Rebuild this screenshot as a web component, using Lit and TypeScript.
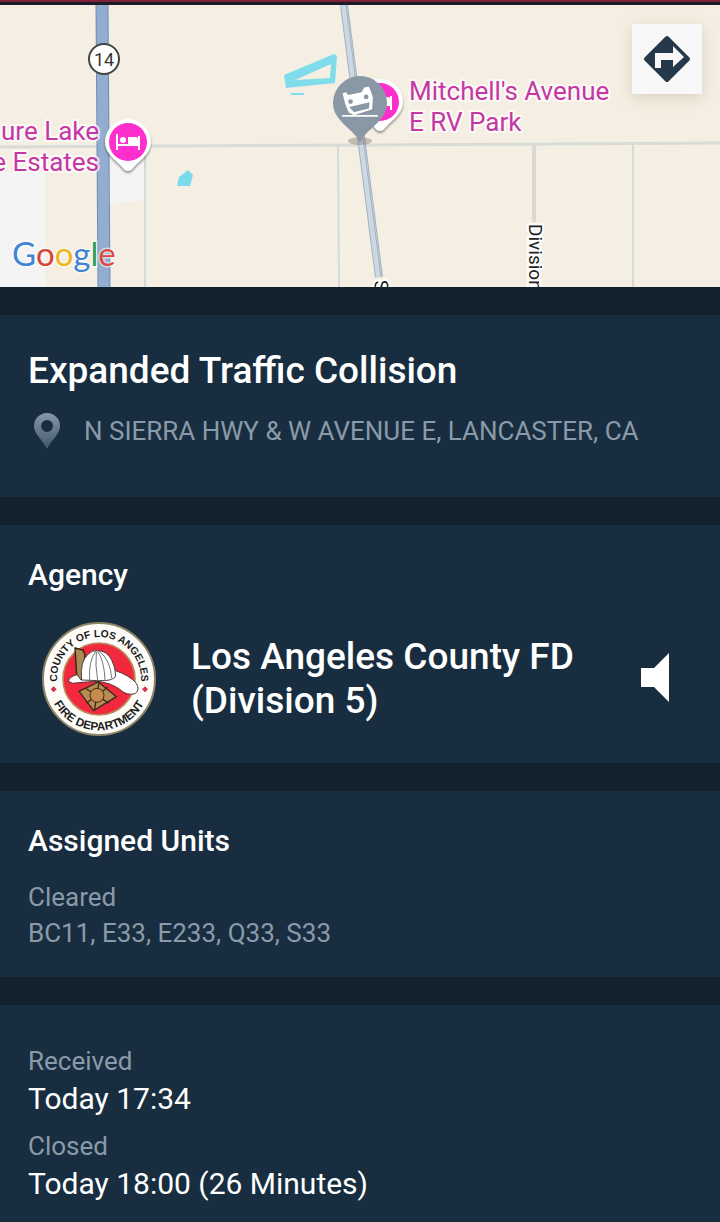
import { LitElement, html, css, svg } from "lit";
import { customElement, property } from "lit/decorators.js";

interface Incident {
  title: string;
  address: string;
  agency: string;
  unitStatus: string;
  units: string[];
  received: string;
  closed: string;
}

const INCIDENT: Incident = {
  title: "Expanded Traffic Collision",
  address: "N SIERRA HWY & W AVENUE E, LANCASTER, CA",
  agency: "Los Angeles County FD (Division 5)",
  unitStatus: "Cleared",
  units: ["BC11", "E33", "E233", "Q33", "S33"],
  received: "Today 17:34",
  closed: "Today 18:00 (26 Minutes)",
};

/** Map header with the incident pin and the directions button. */
@customElement("incident-map")
export class IncidentMap extends LitElement {
  static styles = css`
    :host {
      display: block;
      position: relative;
      height: 282px;
      overflow: hidden;
      background: #f5efe3;
    }

    .canvas {
      display: block;
      width: 100%;
      height: 100%;
    }

    .place {
      font: 400 26px Roboto, sans-serif;
      fill: #c537a5;
      stroke: #fff;
      stroke-width: 4px;
      stroke-opacity: 0.7;
      stroke-linejoin: round;
      paint-order: stroke;
    }

    .place.end {
      text-anchor: end;
    }

    .street {
      font: 400 19px Roboto, sans-serif;
      fill: #222;
      stroke: #fff;
      stroke-width: 4px;
      paint-order: stroke;
    }

    .shield {
      font: 400 18px Roboto, sans-serif;
      fill: #333;
      text-anchor: middle;
    }

    .brand {
      font: 400 33px Lato, sans-serif;
      paint-order: stroke;
      stroke: #fff;
      stroke-width: 3px;
      stroke-opacity: 0.6;
    }

    .pin {
      filter: drop-shadow(0 2px 1px rgba(0, 0, 0, 0.4));
    }

    .directions {
      position: absolute;
      top: 19px;
      right: 18px;
      width: 70px;
      height: 70px;
      padding: 0;
      border: 0;
      background: #f9f8f8;
      box-shadow: 0 4px 14px rgba(90, 70, 40, 0.18);
      cursor: pointer;
    }

    .directions svg {
      display: block;
      width: 100%;
      height: 100%;
    }
  `;

  private _lodgingPin(x: number, y: number) {
    return svg`
      <g transform="translate(${x} ${y})">
        <path class="pin" fill="#fff"
          d="M0 29c-3 0-4-2-7-5C-12 18-23 12-23 0A23 23 0 1 1 23 0C23 12 12 18 7 24 4 27 3 29 0 29Z" />
        <circle r="19" fill="#ff2fce" />
        <path fill="#fff" d="M-12-8h2V2H0V-5h8q2 0 2 2V-6h2V8h-2V4h-20v4h-2Z" />
        <circle cx="-5" cy="-2" r="3" fill="#fff" />
      </g>
    `;
  }

  render() {
    return html`
      <svg class="canvas" viewBox="0 5 720 282" preserveAspectRatio="xMidYMid slice" role="img" aria-label="Incident map">
        <rect y="5" width="720" height="282" fill="#f5efe3" />
        <path fill="#f4f4f4" d="M0 172H45V287H0ZM109 150H145V200L109 204Z" />

        <!-- surface streets -->
        <path fill="none" stroke="#d8dbd6" stroke-width="3" d="M0 147 360 145 720 143" />
        <path fill="none" stroke="#d3dadb" stroke-width="2" d="M145 148V287M338 146 339 287M633 144V287" />
        <path fill="none" stroke="#dbd7d6" stroke-width="4" d="M534 144V222" />

        <!-- highway 14 -->
        <path fill="none" stroke="#6f8cb4" stroke-width="13" d="M102 5 104 287" />
        <path fill="none" stroke="#93add0" stroke-width="11" d="M102 5 104 287" />

        <!-- Sierra Hwy -->
        <path fill="none" stroke="#a3b1c0" stroke-width="8" d="M344 5 379 277" />
        <path fill="none" stroke="#cdd8e4" stroke-width="6" d="M344 5 379 277" />
        <path fill="none" stroke="#a3b1c0" d="M346 5 381 277" />

        <!-- water -->
        <path fill="#7fdcea" fill-rule="evenodd"
          d="M284 75 334 54 337 56 335 83 286 88ZM295 80 330 78 331 64Z" />
        <path fill="none" stroke="#7fdcea" stroke-width="2" d="M291 94H304" />
        <path fill="#78dcec" d="M177 186 179 177 188 170 193 175 190 186Z" />

        <circle cx="104" cy="59" r="15" fill="#fff" stroke="#444" stroke-width="2" />
        <text class="shield" x="104" y="66">14</text>

        <text class="place end" x="99" y="140">ure Lake</text>
        <text class="place end" x="99" y="171">e Estates</text>
        <text class="place" x="409" y="100">Mitchell's Avenue</text>
        <text class="place" x="409" y="131">E RV Park</text>
        <text class="street" transform="translate(529 224) rotate(90)">Division</text>
        <text class="street" transform="translate(374 281) rotate(83)">S</text>

        ${this._lodgingPin(128, 142)} ${this._lodgingPin(380, 102)}

        <ellipse cx="360" cy="141" rx="12" ry="4" fill="#77706a" opacity="0.4" />
        <path fill="#8998a4" d="M360 143C356 130 333 122 333 103A27 27 0 0 1 387 103C387 122 364 130 360 143Z" />

        <!-- overturned car -->
        <g transform="translate(240 0) scale(0.333)">
          <path fill="#fff"
            d="M308 281 318 277 325 285 365 277 373 263 387 260 392 272 399 292 397 328 342 346 326 337 316 312Z" />
          <path fill="#8998a4" d="M328 321 389 307 387 326 342 337Z" />
          <circle cx="332" cy="305" r="7" fill="#8998a4" />
          <circle cx="379" cy="291" r="7" fill="#8998a4" />
          <path stroke="#fff" stroke-width="5" d="M307 348H414" />
        </g>

        <text class="brand" x="12" y="266" aria-label="Google"><tspan fill="#4285d4">G</tspan><tspan fill="#d6453c">o</tspan><tspan fill="#f0b51c">o</tspan><tspan fill="#4285d4">g</tspan><tspan fill="#2f9e56">l</tspan><tspan fill="#df4840">e</tspan></text>
      </svg>

      <button class="directions" aria-label="Directions">
        <svg viewBox="0 0 70 70">
          <path fill="#25394a" stroke="#25394a" stroke-width="4" stroke-linejoin="round" d="M35 14 56 35 35 56 14 35Z" />
          <path fill="#f9f8f8" d="M23 29H41V22L52 33 41 43V36H29V44H23Z" />
        </svg>
      </button>
    `;
  }
}

/** Round department seal with lettering set along the ring. */
@customElement("agency-seal")
export class AgencySeal extends LitElement {
  static styles = css`
    :host {
      display: block;
      width: 116px;
      height: 116px;
      flex: none;
    }

    svg {
      display: block;
      overflow: visible;
    }

    text {
      font: 700 31px "Liberation Sans", Arial, sans-serif;
      fill: #1c1c20;
      text-anchor: middle;
    }

    .lower {
      font-size: 35px;
    }
  `;

  render() {
    return html`
      <svg width="116" height="116" viewBox="64 59 348 348" role="img" aria-label="County of Los Angeles Fire Department">
        <defs>
          <path id="top" d="M238 359A126 126 0 0 1 238 107A126 126 0 0 1 238 359" />
          <path id="bottom" d="M84 233A154 154 0 0 0 392 233" />
        </defs>
        <circle cx="238" cy="233" r="168" fill="#fdfcf8" stroke="#8f8566" stroke-width="6" />
        <circle cx="238" cy="233" r="108" fill="#f2283c" stroke="#b98a5c" stroke-width="5" />
        <text><textPath href="#top" startOffset="50%">COUNTY OF LOS ANGELES</textPath></text>
        <text class="lower"><textPath href="#bottom" startOffset="50%">FIRE DEPARTMENT</textPath></text>
        <path fill="#d8344c" d="M102 255 111 264 102 273 93 264ZM376 255 385 264 376 273 367 264Z" />

        <!-- helmet -->
        <path fill="#a98a55" stroke="#2b2118" stroke-width="4" d="M166 140 190 146 196 160 186 236 172 236Z" />
        <path fill="#fff" stroke="#5a3535" stroke-width="3"
          d="M146 240Q148 226 172 220L184 236 288 208Q330 222 350 246 362 266 346 277 322 284 300 264 276 246 236 240 190 242 160 246Z" />
        <path fill="#fff" stroke="#444" stroke-width="3"
          d="M186 236Q180 180 206 158 218 146 234 148 262 148 276 176 288 200 288 224 280 240 238 238Z" />
        <path fill="none" stroke="#777" stroke-width="3"
          d="M228 150Q206 180 210 236M230 150Q226 190 234 238M234 150Q254 180 256 236M238 150Q272 174 276 230" />

        <!-- badge -->
        <path fill="#b98d52" stroke="#3a2a1c" stroke-width="4" d="M236 242 290 286 222 328 178 270Z" />
        <path fill="none" stroke="#3a2a1c" stroke-width="4" d="M196 260 268 306M264 258 200 306M238 242 224 328" />
        <circle cx="232" cy="282" r="21" fill="#c98a4e" stroke="#3a2a1c" stroke-width="3" />
      </svg>
    `;
  }
}

@customElement("app-root")
export class AppRoot extends LitElement {
  @property({ attribute: false })
  incident: Incident = INCIDENT;

  static styles = css`
    :host {
      display: flex;
      flex-direction: column;
      min-height: 100vh;
      background: #12212e;
      color: #fff;
      font-family: Roboto, sans-serif;
    }

    * {
      box-sizing: border-box;
    }

    h1,
    h2,
    p,
    dl,
    dd {
      margin: 0;
    }

    .status-strip {
      height: 5px;
      border-top: 2px solid #7c2136;
      background: #1b1b29;
    }

    main {
      flex: 1;
      display: flex;
      flex-direction: column;
      gap: 28px;
      padding-top: 28px;
    }

    .panel {
      padding: 32px 28px 26px;
      background: #182e40;
    }

    .panel:last-child {
      flex: 1;
      padding: 38px 28px 8px;
    }

    h1,
    .agency-name {
      font-size: 37px;
      font-weight: 500;
      line-height: 44px;
    }

    h1 {
      line-height: 48px;
    }

    h2 {
      font-size: 30px;
      font-weight: 500;
      line-height: 36px;
    }

    .address {
      display: flex;
      align-items: center;
      gap: 20px;
      padding: 18px 0 22px;
    }

    .address svg {
      flex: none;
      width: 36px;
      height: 36px;
    }

    .muted {
      font-size: 26px;
      line-height: 36px;
      color: #8a9aa8;
    }

    .agency {
      display: flex;
      align-items: center;
      gap: 34px;
      padding: 28px 0 0 13px;
    }

    .agency-name {
      flex: 1;
    }

    .speaker {
      flex: none;
      width: 72px;
      height: 72px;
      padding: 0;
      border: 0;
      background: none;
      cursor: pointer;
    }

    .speaker svg {
      display: block;
    }

    .units {
      padding-top: 20px;
    }

    .times dd {
      padding-bottom: 9px;
      font-size: 30px;
      line-height: 40px;
    }
  `;

  render() {
    const { title, address, agency, unitStatus, units, received, closed } = this.incident;

    return html`
      <div class="status-strip"></div>
      <incident-map></incident-map>

      <main>
        <section class="panel">
          <h1>${title}</h1>
          <div class="address">
            <svg viewBox="0 0 36 36" aria-hidden="true">
              <defs>
                <linearGradient id="fade" x1="0" y1="0" x2="0" y2="1">
                  <stop offset="0" stop-color="#8a97a8" />
                  <stop offset="1" stop-color="#3f566b" />
                </linearGradient>
              </defs>
              <path fill="url(#fade)" fill-rule="evenodd"
                d="M19 0A13 13 0 0 0 6 13C6 21 14 26 19 36 24 26 32 21 32 13A13 13 0 0 0 19 0ZM19 7A6 6 0 1 1 19 19 6 6 0 0 1 19 7Z" />
            </svg>
            <p class="muted">${address}</p>
          </div>
        </section>

        <section class="panel">
          <h2>Agency</h2>
          <div class="agency">
            <agency-seal></agency-seal>
            <p class="agency-name">${agency}</p>
            <button class="speaker" aria-label="Listen">
              <svg width="72" height="72" viewBox="0 0 72 72">
                <path fill="#fff" d="M21 25H34L49 10V59L34 44H21Z" />
              </svg>
            </button>
          </div>
        </section>

        <section class="panel">
          <h2>Assigned Units</h2>
          <div class="units muted">
            <p>${unitStatus}</p>
            <p>${units.join(", ")}</p>
          </div>
        </section>

        <section class="panel">
          <dl class="times">
            <dt class="muted">Received</dt>
            <dd>${received}</dd>
            <dt class="muted">Closed</dt>
            <dd>${closed}</dd>
          </dl>
        </section>
      </main>
    `;
  }
}

declare global {
  interface HTMLElementTagNameMap {
    "app-root": AppRoot;
    "incident-map": IncidentMap;
    "agency-seal": AgencySeal;
  }
}
